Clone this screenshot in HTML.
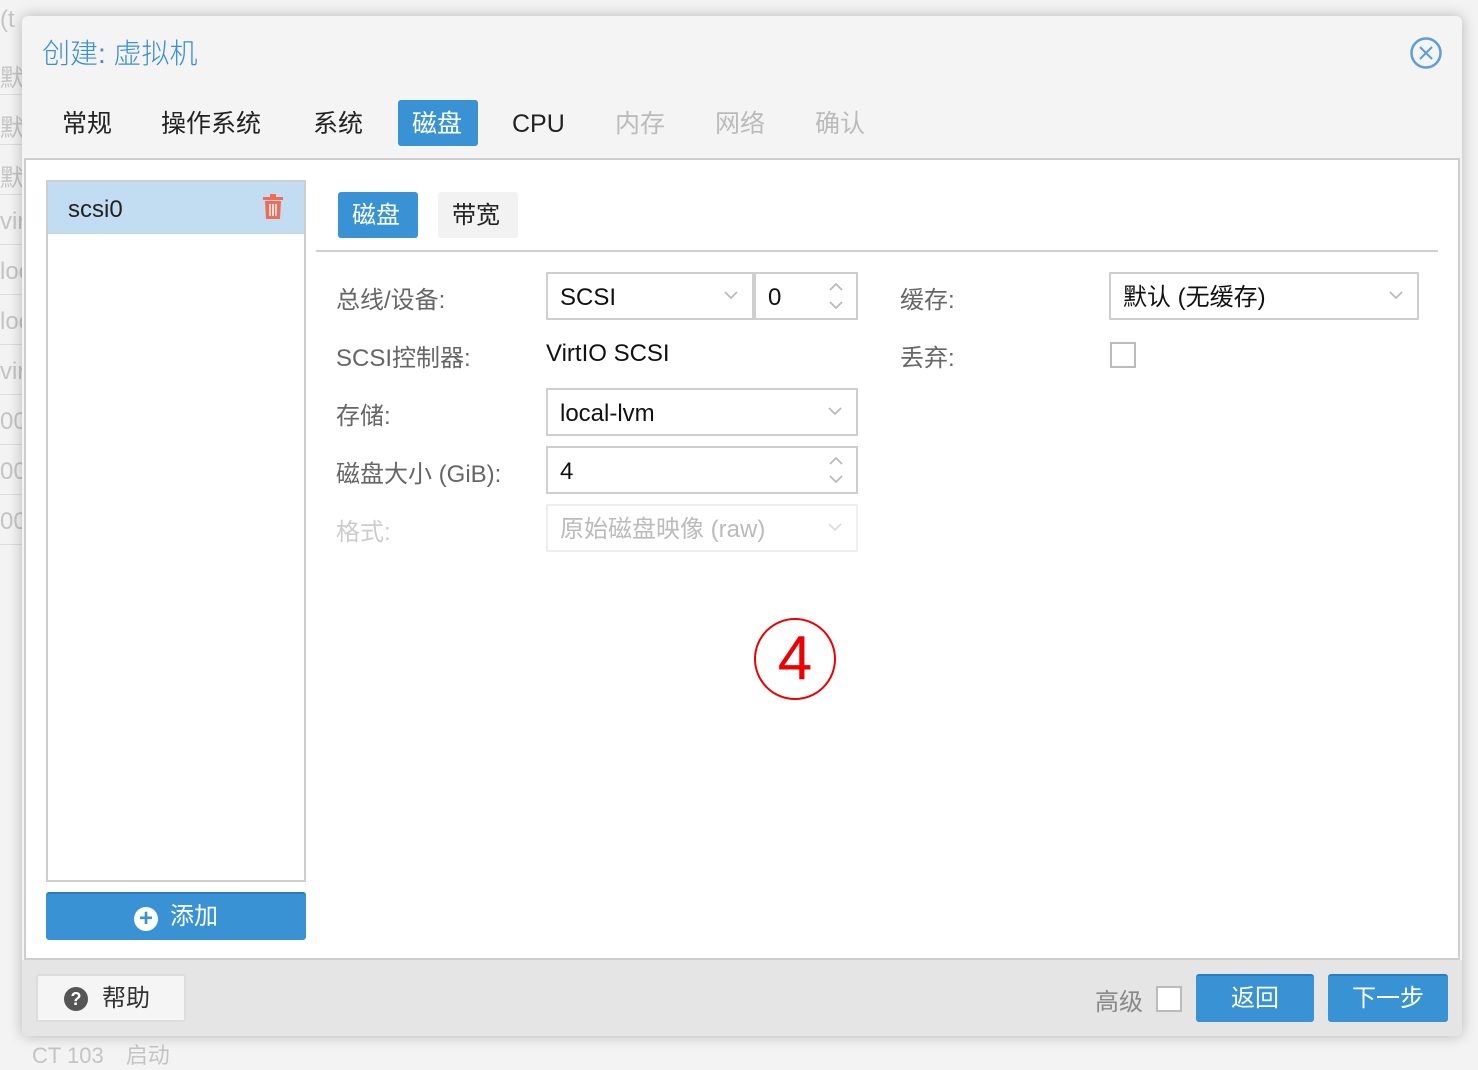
<!DOCTYPE html>
<html><head><meta charset="utf-8"><style>
*{box-sizing:border-box;margin:0;padding:0}
html,body{width:1478px;height:1056px}
body{background:#f3f3f3;font-family:"Liberation Sans","Noto Sans CJK SC",sans-serif;position:relative;overflow:hidden;color:#222}
.abs{position:absolute}
.bg{color:#c4c4c4;font-size:24px;left:0}
.hl{position:absolute;left:0;width:22px;height:1px;background:#ddd}
#dlg{position:absolute;left:22px;top:16px;width:1440px;height:1020px;background:#f4f4f4;border-radius:6px;box-shadow:0 0 14px rgba(0,0,0,.25)}
.title{left:20px;top:18px;font-size:28px;color:#3a8fd6;font-weight:300}
.tab{top:84px;height:46px;font-size:25px;line-height:48px;padding:0 14px;color:#222;border-radius:3px}
.tab.dis{color:#bbb}
.tab.act{background:#3892d4;color:#fff}
#main{position:absolute;left:2px;top:142px;width:1436px;height:802px;background:#fff;border:2px solid #cfcfcf}
.lbl{font-size:24px;color:#666}
.box{position:absolute;border:2px solid #cfcfcf;background:#fff;height:48px;font-size:24px;line-height:48px;padding-left:12px;color:#111}
.chev{position:absolute;right:14px;top:14px;width:14px;height:14px}
.btn{position:absolute;background:#3892d4;color:#fff;font-size:24px;text-align:center;border-radius:3px;border-top:2px solid #2a7cc4}
</style></head><body>
<div class="bg abs" style="top:6px">(t</div>
<div class="bg abs" style="top:58px">默认</div>
<div class="bg abs" style="top:108px">默认</div>
<div class="bg abs" style="top:158px">默认</div>
<div class="bg abs" style="top:208px">virt</div>
<div class="bg abs" style="top:258px">loca</div>
<div class="bg abs" style="top:308px">loca</div>
<div class="bg abs" style="top:358px">virt</div>
<div class="bg abs" style="top:408px">00</div>
<div class="bg abs" style="top:458px">00</div>
<div class="bg abs" style="top:508px">00</div>
<div class="bg abs" style="top:1038px;left:32px;font-size:22px">CT 103　启动</div>
<div class="hl" style="top:94px"></div><div class="hl" style="top:144px"></div><div class="hl" style="top:194px"></div><div class="hl" style="top:244px"></div><div class="hl" style="top:294px"></div><div class="hl" style="top:344px"></div><div class="hl" style="top:394px"></div><div class="hl" style="top:444px"></div><div class="hl" style="top:494px"></div><div class="hl" style="top:544px"></div>

<div id="dlg">
<div class="abs title" style="top:16px">创建: 虚拟机</div>
<svg class="abs" style="left:1387px;top:20px" width="34" height="34" viewBox="0 0 34 34"><circle cx="17" cy="17" r="14.5" fill="none" stroke="#5a9fdc" stroke-width="2.5"/><path d="M11 11L23 23M23 11L11 23" stroke="#5a9fdc" stroke-width="2"/></svg>
<div class="abs tab" style="left:26px">常规</div>
<div class="abs tab" style="left:125px">操作系统</div>
<div class="abs tab" style="left:277px">系统</div>
<div class="abs tab act" style="left:376px;width:80px">磁盘</div>
<div class="abs tab" style="left:476px">CPU</div>
<div class="abs tab dis" style="left:579px">内存</div>
<div class="abs tab dis" style="left:679px">网络</div>
<div class="abs tab dis" style="left:779px">确认</div>

<div id="main">
 <div class="abs" style="left:20px;top:20px;width:260px;height:702px;border:2px solid #cfcfcf">
  <div class="abs" style="left:0;top:0;width:256px;height:52px;background:#c2ddf1;font-size:24px;line-height:56px;padding-left:20px">scsi0</div>
  <svg class="abs" style="left:214px;top:12px" width="22" height="26" viewBox="0 0 22 26"><rect x="1" y="3" width="20" height="3" fill="#f26b57"/><rect x="8" y="0" width="6" height="4" fill="#f26b57"/><path d="M3 7h16l-1 18H4z" fill="#f26b57"/><path d="M8 10v12M11 10v12M14 10v12" stroke="#fff" stroke-width="1.5"/></svg>
 </div>
 <div class="btn" style="left:20px;top:732px;width:260px;height:48px;line-height:46px"><span style="display:inline-block;width:24px;height:24px;border-radius:50%;background:#fff;color:#3892d4;font-weight:bold;line-height:24px;font-size:24px;vertical-align:-2px;margin-right:12px">+</span>添加</div>

 <div class="abs tab act" style="left:312px;top:32px;height:46px;width:80px;line-height:48px;font-size:24px">磁盘</div>
 <div class="abs tab" style="left:412px;top:32px;height:46px;width:80px;line-height:48px;font-size:24px;background:#f2f2f2">带宽</div>
 <div class="abs" style="left:290px;top:90px;width:1122px;height:2px;background:#d0d0d0"></div>

 <div class="abs lbl" style="left:310px;top:120px">总线/设备:</div>
 <div class="box" style="left:520px;top:112px;width:208px">SCSI<svg class="chev" viewBox="0 0 14 14"><path d="M1 4l6 6 6-6" stroke="#bbb" stroke-width="1.8" fill="none"/></svg></div>
 <div class="box" style="left:728px;top:112px;width:104px">0<svg class="abs" style="right:12px;top:6px" width="16" height="32" viewBox="0 0 16 32"><path d="M2 10l6-6 6 6M2 22l6 6 6-6" stroke="#bbb" stroke-width="1.8" fill="none"/></svg></div>
 <div class="abs lbl" style="left:310px;top:178px">SCSI控制器:</div>
 <div class="abs" style="left:520px;top:180px;font-size:24px;color:#111">VirtIO SCSI</div>
 <div class="abs lbl" style="left:310px;top:236px">存储:</div>
 <div class="box" style="left:520px;top:228px;width:312px">local-lvm<svg class="chev" viewBox="0 0 14 14"><path d="M1 4l6 6 6-6" stroke="#bbb" stroke-width="1.8" fill="none"/></svg></div>
 <div class="abs lbl" style="left:310px;top:294px">磁盘大小 (GiB):</div>
 <div class="box" style="left:520px;top:286px;width:312px">4<svg class="abs" style="right:12px;top:6px" width="16" height="32" viewBox="0 0 16 32"><path d="M2 10l6-6 6 6M2 22l6 6 6-6" stroke="#bbb" stroke-width="1.8" fill="none"/></svg></div>
 <div class="abs lbl" style="left:310px;top:352px;color:#ccc">格式:</div>
 <div class="box" style="left:520px;top:344px;width:312px;border-color:#eee;color:#bbb">原始磁盘映像 (raw)<svg class="chev" viewBox="0 0 14 14"><path d="M1 4l6 6 6-6" stroke="#ddd" stroke-width="1.8" fill="none"/></svg></div>

 <div class="abs lbl" style="left:874px;top:120px">缓存:</div>
 <div class="box" style="left:1083px;top:112px;width:310px">默认 (无缓存)<svg class="chev" viewBox="0 0 14 14"><path d="M1 4l6 6 6-6" stroke="#bbb" stroke-width="1.8" fill="none"/></svg></div>
 <div class="abs lbl" style="left:874px;top:178px">丢弃:</div>
 <div class="abs" style="left:1084px;top:182px;width:26px;height:26px;border:2px solid #bbb;background:#fff"></div>

 <div class="abs" style="left:728px;top:458px;width:82px;height:82px;border:2.5px solid #e00;border-radius:50%;color:#e00;font-size:62px;text-align:center;line-height:78px">4</div>
</div>

<div class="abs" style="left:0;top:944px;width:1440px;height:76px;background:#e5e5e5;border-radius:0 0 6px 6px"></div>
<div class="abs" style="left:14px;top:958px;width:150px;height:48px;background:#f5f5f5;border:2px solid #ddd;border-radius:3px;font-size:24px;line-height:46px;padding-left:26px;color:#333"><span style="display:inline-block;width:24px;height:24px;border-radius:50%;background:#555;color:#fff;font-size:18px;font-weight:bold;text-align:center;line-height:24px;vertical-align:1px;margin-right:14px">?</span>帮助</div>
<div class="abs" style="left:1073px;top:966px;font-size:24px;color:#888">高级</div>
<div class="abs" style="left:1134px;top:970px;width:26px;height:26px;border:2px solid #bbb;background:#fff"></div>
<div class="btn" style="left:1174px;top:958px;width:118px;height:48px;line-height:46px">返回</div>
<div class="btn" style="left:1306px;top:958px;width:120px;height:48px;line-height:46px">下一步</div>
</div>
</body></html>
